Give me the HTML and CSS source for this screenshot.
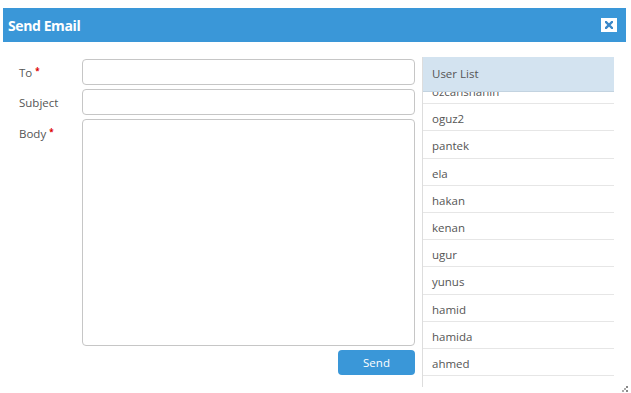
FILE: index.html
```html
<!DOCTYPE html>
<html lang="en">
<head>
    <meta charset="UTF-8">
    <title>Send Email</title>
    <link rel="stylesheet" href="styles.css">
</head>
<body>

    <div class="dialog">
        <header class="dialog_header">
            <h1 class="dialog_title">Send Email</h1>
            <button class="close_btn" type="button" aria-label="Close">
                <svg width="8" height="8" viewBox="0 0 8 8">
                    <path d="M1 1 L7 7 M7 1 L1 7" stroke="#3a87c8" stroke-width="2.4" stroke-linecap="square"/>
                </svg>
            </button>
        </header>

        <div class="dialog_body">
            <form class="mail_form">
                <label class="field_label" for="mailTo">To <span class="req">*</span></label>
                <input id="mailTo" class="field_input" type="text">

                <label class="field_label" for="mailSubject">Subject</label>
                <input id="mailSubject" class="field_input" type="text">

                <label class="field_label body_label" for="mailBody">Body <span class="req">*</span></label>
                <textarea id="mailBody" class="field_area"></textarea>

                <div class="form_actions">
                    <button class="send_btn" type="button">Send</button>
                </div>
            </form>

            <section class="user_list">
                <h2 class="user_list_head">User List</h2>
                <ul class="user_items">
                    <li>ozcanshahin</li>
                    <li>oguz2</li>
                    <li>pantek</li>
                    <li>ela</li>
                    <li>hakan</li>
                    <li>kenan</li>
                    <li>ugur</li>
                    <li>yunus</li>
                    <li>hamid</li>
                    <li>hamida</li>
                    <li>ahmed</li>
                </ul>
            </section>
        </div>

        <svg class="resize_grip" width="6" height="6" viewBox="0 0 6 6">
            <rect x="4" y="0" width="2" height="2" fill="#888"/>
            <rect x="2" y="2" width="2" height="2" fill="#aaa"/>
            <rect x="0" y="4" width="2" height="2" fill="#aaa"/>
            <rect x="4" y="4" width="2" height="2" fill="#888"/>
        </svg>
    </div>

</body>
</html>
```

FILE: styles.css
```css
* {
    padding: 0;
    margin: 0;
    box-sizing: border-box;
    font-family: 'Open Sans', 'Liberation Sans', sans-serif;
    font-size: 12px;
}
body {
    background: #fff;
}
ul {
    list-style-type: none;
}
.dialog {
    position: relative;
    width: 623px;
    height: 385px;
    margin: 8px 0 0 3px;
}
.dialog_header {
    display: flex;
    align-items: center;
    justify-content: space-between;
    height: 34px;
    padding: 0 9px 0 5px;
    background: #3a97d8;
}
.dialog_title {
    font-size: 14px;
    font-weight: bold;
    color: #fff;
    letter-spacing: -0.4px;
}
.close_btn {
    display: flex;
    align-items: center;
    justify-content: center;
    width: 16px;
    height: 14px;
    border: 0;
    background: #fff;
}
.dialog_body {
    display: flex;
    align-items: flex-start;
    padding: 15px 0 0 16px;
}
.mail_form {
    display: grid;
    grid-template-columns: 63px 333px;
    row-gap: 4px;
    align-items: center;
    padding-top: 2px;
}
.field_label {
    color: #555;
    font-size: 11.5px;
}
.body_label {
    align-self: start;
    padding-top: 7px;
}
.req {
    color: #d00;
    font-size: 8px;
    font-weight: bold;
    vertical-align: 3px;
}
.field_input {
    height: 26px;
    border: 1px solid #c6c6c6;
    border-radius: 4px;
    outline: 0;
}
.field_area {
    height: 227px;
    border: 1px solid #c6c6c6;
    border-radius: 4px;
    outline: 0;
    resize: none;
}
.form_actions {
    grid-column: 2;
    display: flex;
    justify-content: flex-end;
}
.send_btn {
    width: 77px;
    height: 25px;
    border: 0;
    border-radius: 4px;
    background: #3a97d8;
    color: #fff;
    font-size: 11.5px;
}
.user_list {
    width: 192px;
    height: 330px;
    margin-left: 7px;
    overflow: hidden;
    border-left: 1px solid #ddd;
}
.user_list_head {
    position: relative;
    z-index: 1;
    height: 35px;
    padding: 9px 0 0 9px;
    background: #d3e3f0;
    border-bottom: 1px solid #c3d3e0;
    color: #555;
    font-size: 11.5px;
    font-weight: normal;
}
.user_items {
    margin-top: -15px;
}
.user_items li {
    padding: 6px 9px 3px;
    line-height: 17.2px;
    border-bottom: 1px solid #e6e6e6;
    color: #555;
    font-size: 11.5px;
}
.resize_grip {
    position: absolute;
    right: -2px;
    bottom: 1px;
}
```
